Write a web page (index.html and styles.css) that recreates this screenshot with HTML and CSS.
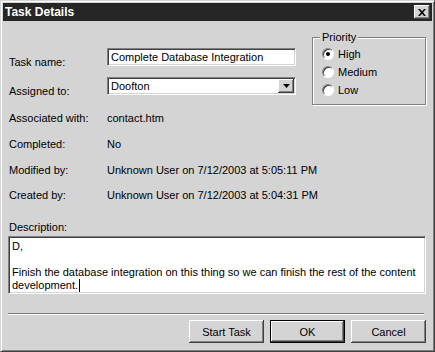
FILE: index.html
```html
<!DOCTYPE html>
<html>
<head>
<meta charset="utf-8">
<link rel="stylesheet" href="styles.css">
</head>
<body>
<div class="window">
  <div class="titlebar">
    <span class="title">Task Details</span>
    <span class="close"><svg width="8" height="7" viewBox="0 0 8 7"><path d="M0 0h2l2 2.3 2-2.3h2l-3 3.5 3 3.5h-2l-2-2.3-2 2.3h-2l3-3.5z" fill="#000"/></svg></span>
  </div>
  <div class="content">
    <div class="top">
      <div class="form-top">
        <div class="row-input first">
          <span class="label">Task name:</span>
          <div class="input">Complete Database Integration</div>
        </div>
        <div class="row-input">
          <span class="label">Assigned to:</span>
          <div class="input select"><span>Doofton</span><span class="drop"><svg width="7" height="4" viewBox="0 0 7 4"><path d="M0 0h7l-3.5 4z" fill="#000"/></svg></span></div>
        </div>
      </div>
      <fieldset class="priority">
        <legend>Priority</legend>
        <div class="radio-row"><span class="radio checked"></span>High</div>
        <div class="radio-row"><span class="radio"></span>Medium</div>
        <div class="radio-row"><span class="radio"></span>Low</div>
      </fieldset>
    </div>
    <div class="info"><span class="label">Associated with:</span><span>contact.htm</span></div>
    <div class="info"><span class="label">Completed:</span><span>No</span></div>
    <div class="info"><span class="label">Modified by:</span><span>Unknown User on 7/12/2003 at 5:05:11 PM</span></div>
    <div class="info last"><span class="label">Created by:</span><span>Unknown User on 7/12/2003 at 5:04:31 PM</span></div>
    <div class="desc-label">Description:</div>
    <div class="textarea">D,<br><br>Finish the database integration on this thing so we can finish the rest of the content<br>development.<span class="caret"></span></div>
    <div class="sep"></div>
    <div class="buttons">
      <button class="btn">Start Task</button>
      <button class="btn default">OK</button>
      <button class="btn">Cancel</button>
    </div>
  </div>
</div>
</body>
</html>
```
FILE: styles.css
```css
html, body {
  margin: 0;
  padding: 0;
  background: #d4d4d4;
}
body {
  font-family: "Liberation Sans", Arial, sans-serif;
  font-size: 11px;
  color: #000;
}
.window {
  width: 435px;
  height: 352px;
  box-sizing: border-box;
  border: 1px solid;
  border-color: #d4d4d4 #404040 #404040 #d4d4d4;
  box-shadow: inset 1px 1px #fff, inset -1px -1px #808080;
  padding: 2px;
  background: #d4d4d4;
  display: flex;
  flex-direction: column;
}
.titlebar {
  height: 18px;
  background: #262626;
  display: flex;
  align-items: center;
  justify-content: space-between;
  padding: 0 2px;
}
.title {
  color: #fff;
  font-weight: bold;
  font-size: 12px;
}
.close {
  width: 16px;
  height: 14px;
  background: #d4d4d4;
  box-shadow: inset -1px -1px #404040, inset 1px 1px #fff, inset -2px -2px #808080;
  display: flex;
  align-items: center;
  justify-content: center;
}
.content {
  padding: 0 6px 0 5px;
  display: flex;
  flex-direction: column;
}
.top {
  display: flex;
  align-items: flex-start;
}
.form-top {
  padding-top: 27px;
}
.row-input {
  display: flex;
  align-items: flex-start;
  height: 27px;
}
.row-input.first {
  height: 29px;
}
.row-input .label {
  padding-top: 8px;
}
.label {
  width: 98px;
  padding-left: 1px;
  flex: none;
  line-height: 13px;
}
.input {
  width: 189px;
  height: 18px;
  box-sizing: border-box;
  background: #fff;
  border: 1px solid;
  border-color: #808080 #fff #fff #808080;
  box-shadow: inset 1px 1px #404040, inset -1px -1px #d4d4d4;
  padding: 0 3px;
  line-height: 16px;
}
.select {
  display: flex;
  justify-content: space-between;
  align-items: center;
  padding-right: 1px;
}
.drop {
  width: 16px;
  height: 14px;
  background: #d4d4d4;
  box-shadow: inset -1px -1px #404040, inset 1px 1px #fff, inset -2px -2px #808080;
  display: flex;
  align-items: center;
  justify-content: center;
}
.priority {
  margin: 10px 0 0 auto;
  width: 114px;
  height: 74px;
  box-sizing: border-box;
  border: 1px solid #808080;
  box-shadow: 1px 1px #fff, inset 1px 1px #fff;
  padding: 1px 0 0 9px;
}
.priority legend {
  padding: 0 2px;
  margin-left: -2px;
  line-height: 13px;
  background: #d4d4d4;
}
.radio-row {
  display: flex;
  align-items: center;
  height: 18px;
}
.radio {
  width: 12px;
  height: 12px;
  box-sizing: border-box;
  border-radius: 50%;
  background: #fff;
  border: 1px solid;
  border-color: #808080 #fff #fff #808080;
  box-shadow: inset 1px 1px #404040;
  margin-right: 4px;
  display: flex;
  align-items: center;
  justify-content: center;
}
.radio.checked::after {
  content: "";
  width: 4px;
  height: 4px;
  border-radius: 50%;
  background: #000;
}
.info {
  display: flex;
  align-items: center;
  height: 26px;
  line-height: 13px;
}
.info.last {
  height: 24px;
}
.desc-label {
  margin-top: 14px;
  line-height: 13px;
  padding-left: 1px;
}
.textarea {
  margin-top: 2px;
  height: 58px;
  box-sizing: border-box;
  background: #fff;
  border: 1px solid;
  border-color: #808080 #fff #fff #808080;
  box-shadow: inset 1px 1px #404040, inset -1px -1px #d4d4d4;
  padding: 3px 3px 0 3px;
  line-height: 13px;
  white-space: nowrap;
  overflow: hidden;
}
.caret {
  display: inline-block;
  width: 1px;
  height: 13px;
  background: #000;
  vertical-align: -3px;
  margin-left: 1px;
}
.sep {
  margin-top: 19px;
  margin-right: 2px;
  border-top: 1px solid #808080;
  border-bottom: 1px solid #fff;
}
.buttons {
  margin-top: 5px;
  display: flex;
  justify-content: flex-end;
  gap: 6px;
}
.btn {
  width: 75px;
  height: 23px;
  font-family: "Liberation Sans", Arial, sans-serif;
  font-size: 11px;
  color: #000;
  background: #d4d4d4;
  border: none;
  padding: 0;
  box-shadow: inset -1px -1px #404040, inset 1px 1px #fff, inset -2px -2px #808080;
}
.btn.default {
  border: 1px solid #000;
}
```
